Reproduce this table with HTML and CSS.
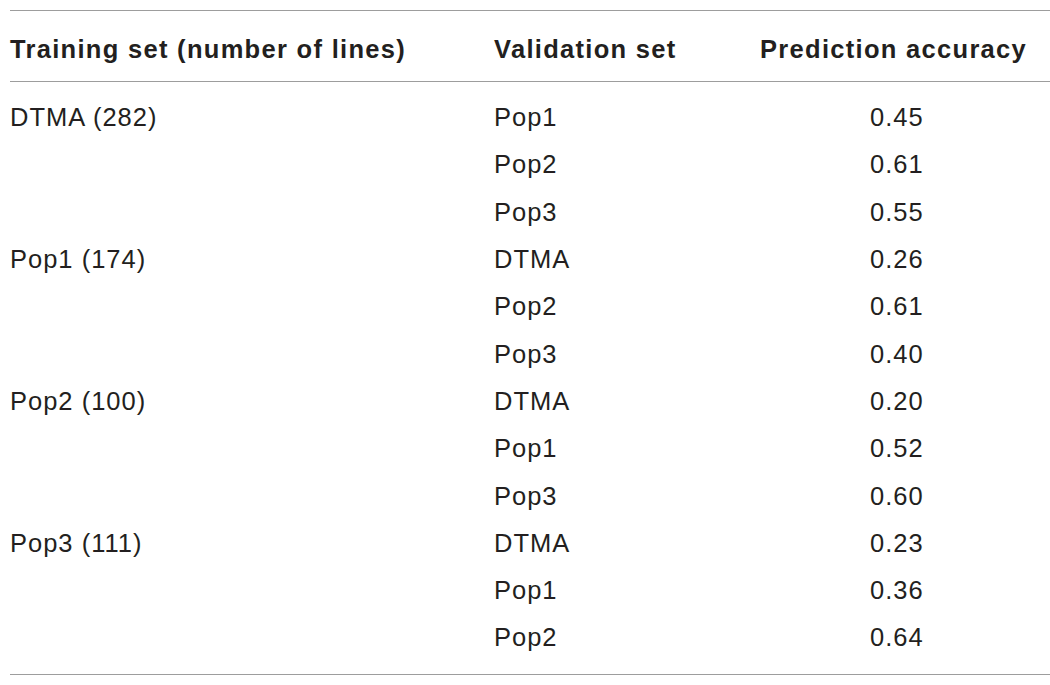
FILE: index.html
```html
<!DOCTYPE html>
<html>
<head>
<meta charset="utf-8">
<link rel="stylesheet" href="styles.css">
</head>
<body>
<div class="wrap">
<table class="tbl">
<colgroup><col class="c1"><col class="c2"><col class="c3"></colgroup>
<thead>
<tr><th>Training set (number of lines)</th><th>Validation set</th><th>Prediction accuracy</th></tr>
</thead>
<tbody>
<tr class="first"><td>DTMA (282)</td><td>Pop1</td><td class="num">0.45</td></tr>
<tr><td></td><td>Pop2</td><td class="num">0.61</td></tr>
<tr><td></td><td>Pop3</td><td class="num">0.55</td></tr>
<tr><td>Pop1 (174)</td><td>DTMA</td><td class="num">0.26</td></tr>
<tr><td></td><td>Pop2</td><td class="num">0.61</td></tr>
<tr><td></td><td>Pop3</td><td class="num">0.40</td></tr>
<tr><td>Pop2 (100)</td><td>DTMA</td><td class="num">0.20</td></tr>
<tr><td></td><td>Pop1</td><td class="num">0.52</td></tr>
<tr><td></td><td>Pop3</td><td class="num">0.60</td></tr>
<tr><td>Pop3 (111)</td><td>DTMA</td><td class="num">0.23</td></tr>
<tr><td></td><td>Pop1</td><td class="num">0.36</td></tr>
<tr class="last"><td></td><td>Pop2</td><td class="num">0.64</td></tr>
</tbody>
</table>
</div>
</body>
</html>
```
FILE: styles.css
```css
html, body {
  margin: 0;
  padding: 0;
  background: #fff;
  overflow: hidden;
}
.wrap {
  padding: 10px 0 0 10px;
}
.tbl {
  border-collapse: collapse;
  table-layout: fixed;
  width: 1050px;
  font-family: "Liberation Sans", Arial, sans-serif;
  color: #231f20;
  font-size: 25.5px;
  letter-spacing: 1px;
}
.c1 { width: 484px; }
.c2 { width: 266px; }
.c3 { width: 300px; }
.tbl th {
  text-align: left;
  font-weight: bold;
  letter-spacing: 1.3px;
  white-space: nowrap;
  height: 64px;
  padding: 6px 0 0 0;
  border-top: 1px solid #9d9d9d;
  border-bottom: 1px solid #9d9d9d;
  vertical-align: middle;
}
.tbl td {
  height: 47.3px;
  padding: 0;
  vertical-align: middle;
  white-space: nowrap;
}
.tbl td.num {
  padding-left: 110px;
}
.tbl tr.first td {
  padding-top: 12px;
}
.tbl tr.last td {
  padding-bottom: 12px;
  border-bottom: 1px solid #9d9d9d;
}
```
